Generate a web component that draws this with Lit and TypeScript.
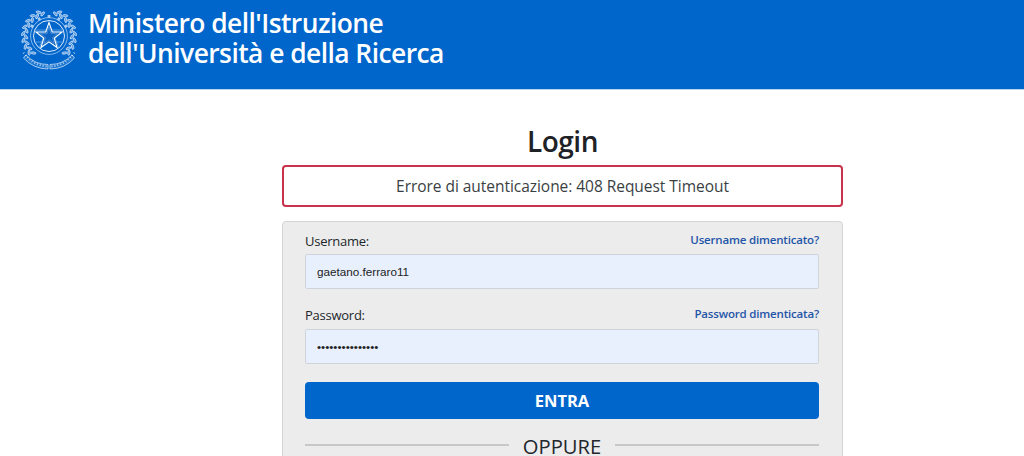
import { LitElement, html, css, svg } from "lit";
import { customElement } from "lit/decorators.js";

const CX = 28;
const CY = 30;

const leaves = (side: number) => {
  const out = [];
  for (let i = 0; i < 17; i++) {
    const deg = -74 + i * 7.6;
    const a = (deg * Math.PI) / 180;
    const r = i % 2 ? 26 : 23;
    const x = CX + side * r * Math.cos(a);
    const y = CY + r * Math.sin(a);
    const rot = side * (deg + (i % 2 ? 55 : 125));
    out.push(
      svg`<ellipse cx=${x.toFixed(1)} cy=${y.toFixed(1)} rx="2.6" ry="1.1" transform="rotate(${rot.toFixed(0)} ${x.toFixed(1)} ${y.toFixed(1)})"/>`
    );
  }
  return out;
};

const cog = () => {
  const out = [];
  for (let i = 0; i < 12; i++) {
    const deg = i * 30;
    if (deg > 70 && deg < 290) continue;
    out.push(svg`<rect x=${CX - 1.4} y=${CY - 21} width="2.8" height="3" transform="rotate(${deg} ${CX} ${CY})"/>`);
  }
  return out;
};

const ribbonTicks = () => {
  const out = [];
  for (let i = -10; i <= 10; i++) {
    if (i === 0) continue;
    const deg = i * 5.6;
    out.push(svg`<path d="M${CX} 59.5v2" transform="rotate(${deg} ${CX} ${CY})" />`);
  }
  return out;
};

@customElement("app-root")
export class AppRoot extends LitElement {
  static styles = css`
    :host {
      display: block;
      height: 456px;
      overflow: hidden;
      background: #fff;
      font-family: "Open Sans", "Noto Sans", sans-serif;
      color: #1c2024;
    }
    .header {
      box-sizing: border-box;
      height: 90px;
      background: #0066cc;
      border-bottom: 1px solid #b9d2ee;
      display: flex;
      align-items: flex-start;
      padding: 6px 0 0 21px;
      gap: 11px;
    }
    .emblem { width: 56px; height: 64px; flex: none; filter: blur(0.35px); }
    .brand {
      color: #fff;
      font-size: 26.4px;
      font-weight: 600;
      line-height: 30px;
      margin-top: 2px;
      letter-spacing: -0.55px;
      white-space: nowrap;
    }
    .main {
      width: 561px;
      margin-left: 282px;
    }
    h1 {
      margin: 33px 0 0;
      height: 42px;
      font-size: 28px;
      line-height: 36px;
      font-weight: 600;
      letter-spacing: -0.5px;
      text-align: center;
      color: #1e2226;
    }
    .alert {
      box-sizing: border-box;
      height: 42px;
      border: 2px solid #c8334b;
      border-radius: 4px;
      display: flex;
      align-items: center;
      justify-content: center;
      font-size: 15.5px;
      color: #3a3f44;
      letter-spacing: -0.04px;
      margin-bottom: 14px;
    }
    .card {
      box-sizing: border-box;
      height: 300px;
      background: #ececec;
      border: 1px solid #d4d4d4;
      border-radius: 4px;
      padding: 7px 23px 0 22px;
    }
    .row {
      display: flex;
      justify-content: space-between;
      align-items: center;
      height: 25px;
    }
    .second { height: 27px; }
    label {
      font-size: 13px;
      font-weight: 500;
      color: #23272b;
      letter-spacing: -0.25px;
      margin-top: -2px;
    }
    a {
      font-size: 11.5px;
      font-weight: 600;
      color: #1f55a8;
      text-decoration: none;
      letter-spacing: -0.18px;
      margin-top: -4px;
    }
    input {
      display: block;
      box-sizing: border-box;
      width: 100%;
      height: 35px;
      margin: 0 0 13px;
      padding: 0 11px;
      background: #e8f0fe;
      border: 1px solid #cfd4da;
      border-radius: 2px;
      font-family: "Liberation Sans", Arial, sans-serif;
      font-size: 11.7px;
      color: #222;
      outline: none;
    }
    input.pw { margin-bottom: 18px; }
    .enter {
      display: block;
      width: 100%;
      height: 37px;
      border: 0;
      border-radius: 4px;
      background: #0066cc;
      color: #fff;
      font-family: inherit;
      font-size: 16.5px;
      font-weight: 700;
      margin-bottom: 17px;
    }
    .or {
      display: flex;
      align-items: center;
      gap: 14px;
      font-size: 20.2px;
      font-weight: 500;
      color: #23272b;
      line-height: 20px;
    }
    .or::before, .or::after {
      content: "";
      flex: 1;
      height: 2px;
      margin-top: -2px;
      background: #c8c8c8;
    }
  `;

  render() {
    return html`
      <div class="header">
        <svg class="emblem" viewBox="0 0 56 64" fill="none" stroke="#fff" aria-hidden="true">
          <g stroke="#dfeafa" stroke-width="0.7" fill="#5c9ddf">${leaves(1)}${leaves(-1)}</g>
          <g fill="#a9cbf0" stroke="none">${cog()}</g>
          <circle cx="28" cy="30" r="18.4" stroke="#a9cbf0" stroke-width="0.8" />
          <circle cx="28" cy="30" r="15.5" stroke="#dbe8f9" stroke-width="1" />
          <path d="M13 24 L43 24 M13 36 L43 36 M18 42 L28 18 L38 42" stroke="#8ab8ea" stroke-width="0.6" />
          <path
            d="M28 16.5 L31.2 26 L41 26 L33.2 32.2 L36.1 41.5 L28 35.8 L19.9 41.5 L22.8 32.2 L15 26 L24.8 26 Z"
            fill="#0a62c2"
            stroke-width="1.1"
          />
          <path d="M28 21 L30 27.6 L36.4 27.6 L31.4 31.6 L33.2 37.5 L28 33.8 L22.8 37.5 L24.6 31.6 L19.6 27.6 L26 27.6 Z" stroke="#7fb0e8" stroke-width="0.5" />
          <path d="M27 58.5 A30 30 0 0 1 5 49 L2.5 52 A33.5 33.5 0 0 0 27 63 Z" fill="#1f78d2" stroke="#e3eefb" stroke-width="0.7" />
          <path d="M29 58.5 A30 30 0 0 0 51 49 L53.5 52 A33.5 33.5 0 0 1 29 63 Z" fill="#1f78d2" stroke="#e3eefb" stroke-width="0.7" />
          <g stroke="#f2f7fd" stroke-width="0.7">${ribbonTicks()}</g>
        </svg>
        <div class="brand">Ministero dell'Istruzione<br />dell'Università e della Ricerca</div>
      </div>
      <div class="main">
        <h1>Login</h1>
        <div class="alert">Errore di autenticazione: 408 Request Timeout</div>
        <div class="card">
          <div class="row"><label>Username:</label><a href="#">Username dimenticato?</a></div>
          <input type="text" .value=${"gaetano.ferraro11"} readonly />
          <div class="row second"><label>Password:</label><a href="#">Password dimenticata?</a></div>
          <input class="pw" type="password" .value=${"•••••••••••••••"} readonly />
          <button class="enter">ENTRA</button>
          <div class="or">OPPURE</div>
        </div>
      </div>
    `;
  }
}
